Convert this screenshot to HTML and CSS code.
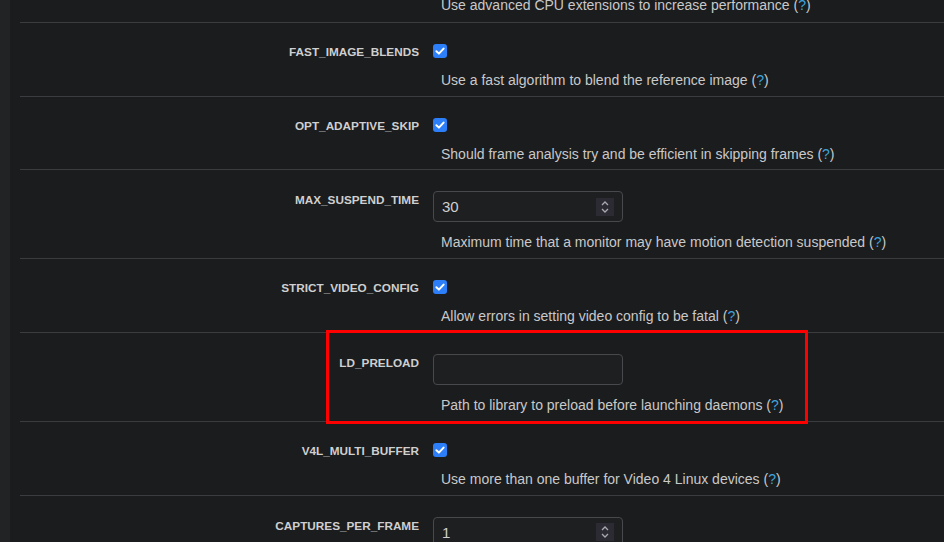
FILE: index.html
```html
<!DOCTYPE html>
<html>
<head>
<meta charset="utf-8">
<link rel="stylesheet" href="styles.css">
</head>
<body>
<div class="page">
  <div class="sidebar"></div>
  <div class="content">
    <div class="opt first">
      <div class="label"></div>
      <div class="ctrl">
        <div class="desc">Use advanced CPU extensions to increase performance (<a href="#">?</a>)</div>
      </div>
    </div>
    <div class="opt check">
      <div class="label">FAST_IMAGE_BLENDS</div>
      <div class="ctrl">
        <span class="cb"><svg viewBox="0 0 14 14" width="14" height="14"><path d="M3.4 7.2 L5.9 9.6 L10.6 4.6" fill="none" stroke="#fff" stroke-width="2" stroke-linecap="round" stroke-linejoin="round"/></svg></span>
        <div class="desc">Use a fast algorithm to blend the reference image (<a href="#">?</a>)</div>
      </div>
    </div>
    <div class="opt check">
      <div class="label">OPT_ADAPTIVE_SKIP</div>
      <div class="ctrl">
        <span class="cb"><svg viewBox="0 0 14 14" width="14" height="14"><path d="M3.4 7.2 L5.9 9.6 L10.6 4.6" fill="none" stroke="#fff" stroke-width="2" stroke-linecap="round" stroke-linejoin="round"/></svg></span>
        <div class="desc">Should frame analysis try and be efficient in skipping frames (<a href="#">?</a>)</div>
      </div>
    </div>
    <div class="opt field">
      <div class="label">MAX_SUSPEND_TIME</div>
      <div class="ctrl">
        <div class="input"><span class="val">30</span><span class="spin"><svg viewBox="0 0 18 18" width="18" height="18"><path d="M6 7 L9 4 L12 7 M6 11 L9 14 L12 11" fill="none" stroke="#a9a9b0" stroke-width="1.3"/></svg></span></div>
        <div class="desc">Maximum time that a monitor may have motion detection suspended (<a href="#">?</a>)</div>
      </div>
    </div>
    <div class="opt check">
      <div class="label">STRICT_VIDEO_CONFIG</div>
      <div class="ctrl">
        <span class="cb"><svg viewBox="0 0 14 14" width="14" height="14"><path d="M3.4 7.2 L5.9 9.6 L10.6 4.6" fill="none" stroke="#fff" stroke-width="2" stroke-linecap="round" stroke-linejoin="round"/></svg></span>
        <div class="desc">Allow errors in setting video config to be fatal (<a href="#">?</a>)</div>
      </div>
    </div>
    <div class="opt field">
      <div class="label">LD_PRELOAD</div>
      <div class="ctrl">
        <div class="input"><span class="val"></span></div>
        <div class="desc">Path to library to preload before launching daemons (<a href="#">?</a>)</div>
      </div>
    </div>
    <div class="opt check">
      <div class="label">V4L_MULTI_BUFFER</div>
      <div class="ctrl">
        <span class="cb"><svg viewBox="0 0 14 14" width="14" height="14"><path d="M3.4 7.2 L5.9 9.6 L10.6 4.6" fill="none" stroke="#fff" stroke-width="2" stroke-linecap="round" stroke-linejoin="round"/></svg></span>
        <div class="desc">Use more than one buffer for Video 4 Linux devices (<a href="#">?</a>)</div>
      </div>
    </div>
    <div class="opt field">
      <div class="label">CAPTURES_PER_FRAME</div>
      <div class="ctrl">
        <div class="input"><span class="val">1</span><span class="spin"><svg viewBox="0 0 18 18" width="18" height="18"><path d="M6 7 L9 4 L12 7 M6 11 L9 14 L12 11" fill="none" stroke="#a9a9b0" stroke-width="1.3"/></svg></span></div>
        <div class="desc">Number of images to capture per frame (<a href="#">?</a>)</div>
      </div>
    </div>
  </div>
  <div class="highlight"></div>
</div>
</body>
</html>
```

FILE: styles.css
```css
* { box-sizing: border-box; }
html, body {
  margin: 0;
  padding: 0;
  background: #1b1c1e;
  overflow: hidden;
  height: 542px;
}
.page {
  position: relative;
  display: flex;
  height: 542px;
  font-family: "Liberation Sans", Arial, sans-serif;
  color: #c9c9c9;
}
.sidebar {
  width: 10px;
  flex: none;
  background: #222325;
}
.content {
  flex: 1;
  margin-left: 10px;
  margin-top: -5.25px;
}
.opt {
  display: grid;
  grid-template-columns: 399px 1fr;
  column-gap: 14px;
  border-top: 1px solid #3b3c3f;
  padding-top: 21px;
}
.opt.first {
  border-top: none;
  padding-top: 0;
  padding-bottom: 7px;
}
.opt.check { padding-bottom: 5.75px; }
.opt.field { padding-bottom: 6px; }
.label {
  text-align: right;
  font-weight: bold;
  font-size: 11.75px;
  line-height: 16px;
  color: #cfcfcf;
}
.check .label { margin-top: 0; }
.field .label { margin-top: 1px; }
.ctrl {
  display: flex;
  flex-direction: column;
  align-items: flex-start;
}
.cb {
  width: 14px;
  height: 14px;
  border-radius: 3px;
  background: #2d7ff9;
  display: block;
}
.cb svg { display: block; }
.desc {
  font-size: 14px;
  line-height: 20px;
  padding-left: 8px;
  color: #c9c9c9;
  white-space: nowrap;
}
.check .desc { margin-top: 12px; }
.field .desc { margin-top: 10px; }
.desc a {
  color: #3ea3dc;
  text-decoration: none;
}
.input {
  width: 190px;
  height: 31px;
  border: 1px solid #48494c;
  border-radius: 4px;
  background: #1e1f21;
  display: flex;
  align-items: center;
  justify-content: space-between;
  padding: 0 8px 0 8px;
}
.val {
  font-size: 15px;
  color: #cfcfcf;
}
.spin {
  width: 18px;
  height: 18px;
  background: #2c2b33;
  display: block;
}
.spin svg { display: block; }
.highlight {
  position: absolute;
  left: 326px;
  top: 330px;
  width: 482px;
  height: 94px;
  border: 3px solid #f00;
}
```
